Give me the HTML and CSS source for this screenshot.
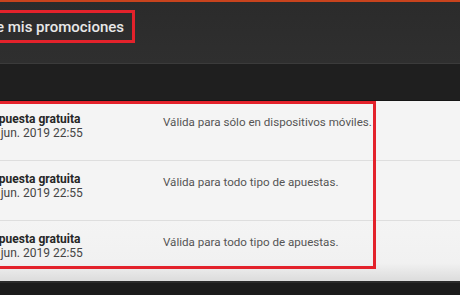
FILE: index.html
```html
<!DOCTYPE html>
<html lang="es">
<head>
  <meta charset="UTF-8">
  <title>Historial de mis promociones</title>
  <link rel="stylesheet" href="styles.css">
</head>
<body>

<div class="topbar"></div>

<header class="header">
  <div class="title-box">
    <h1 class="title">Historial de mis promociones</h1>
  </div>
</header>

<div class="band"></div>

<section class="list">
  <div class="row">
    <div class="info">
      <div class="name">Apuesta gratuita</div>
      <div class="date">7 jun. 2019 22:55</div>
    </div>
    <div class="desc">Válida para sólo en dispositivos móviles.</div>
  </div>
  <div class="row">
    <div class="info">
      <div class="name">Apuesta gratuita</div>
      <div class="date">7 jun. 2019 22:55</div>
    </div>
    <div class="desc">Válida para todo tipo de apuestas.</div>
  </div>
  <div class="row last">
    <div class="info">
      <div class="name">Apuesta gratuita</div>
      <div class="date">7 jun. 2019 22:55</div>
    </div>
    <div class="desc">Válida para todo tipo de apuestas.</div>
  </div>

  <div class="highlight"></div>
</section>

<div class="footer"></div>

</body>
</html>
```

FILE: styles.css
```css
body {
  margin: 0;
  overflow: hidden;
  background-color: #1b1b1b;
  font-family: Roboto, "Liberation Sans", sans-serif;
}

.topbar {
  height: 2px;
  background: #c8431d;
}

.header {
  height: 53px;
  padding-top: 8px;
  background: linear-gradient(#2b2b2b, #2f2f2f);
  border-bottom: 1px solid #3b3b3b;
  display: flex;
  align-items: flex-start;
}

.title-box {
  width: 135px;
  height: 33px;
  box-sizing: border-box;
  border: 3px solid #e3222b;
  border-left: none;
  padding-right: 8px;
  display: flex;
  justify-content: flex-end;
  align-items: center;
}

.title {
  margin: 0;
  white-space: nowrap;
  font-size: 15px;
  font-weight: 500;
  color: #e8e8e8;
}

.band {
  height: 36px;
  background: #1f1f1f;
  border-bottom: 1px solid #151515;
}

.list {
  position: relative;
  margin-left: -20px;
  background: #f4f4f4;
}

.row {
  height: 60px;
  box-sizing: border-box;
  padding-left: 11px;
  border-bottom: 1px solid #dedede;
  display: grid;
  grid-template-columns: 172px 1fr;
  align-items: start;
}

.row.last {
  border-bottom: none;
  background: linear-gradient(#f4f4f4 0%, #f1f1f1 70%, #dcdcdc 100%);
}

.info {
  padding-top: 11px;
}

.name {
  font-size: 12px;
  font-weight: bold;
  line-height: 14px;
  color: #262626;
  white-space: nowrap;
}

.date {
  font-size: 12px;
  line-height: 14px;
  color: #444;
  white-space: nowrap;
}

.desc {
  padding-top: 14px;
  font-size: 11.6px;
  line-height: 14px;
  color: #555;
  white-space: nowrap;
}

/* red annotation frame over the list */
.highlight {
  position: absolute;
  top: 0;
  left: 0;
  width: 396px;
  height: 168px;
  box-sizing: border-box;
  border: 3px solid #e3222b;
}

.footer {
  height: 16px;
  border-top: 2px solid #2a2a2a;
  background: #1b1b1b;
}
```
